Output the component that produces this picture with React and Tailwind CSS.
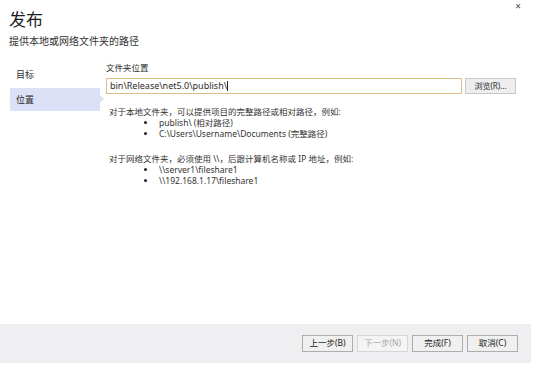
import React from 'react';

const FONT = { fontFamily: '"Noto Sans", "Noto Sans CJK SC", sans-serif' };

// ------- Footer button -------
const Btn = ({ children, disabled }) => (
  <button
    className={`w-[51px] h-[17px] flex items-center justify-center border text-[8.5px] leading-none ${
      disabled
        ? 'border-[#d6d6d6] bg-[#f4f4f4] text-[#a8a8a8]'
        : 'border-[#adadad] bg-[#f0f0f0] text-[#222]'
    }`}
  >
    {children}
  </button>
);

const Bullet = ({ children }) => (
  <li className="flex items-center h-[11px]">
    <span className="w-[3px] h-[3px] rounded-full bg-[#222] ml-[35px] mr-[12px]" />
    <span>{children}</span>
  </li>
);

export default function App() {
  return (
    <div className="relative w-[554px] h-[370px] bg-white flex flex-col text-[#2b2b2b]" style={FONT}>
      {/* close */}
      <span className="absolute top-[1px] right-[33px] text-[10px] leading-none text-[#444]">×</span>

      {/* Header */}
      <div className="pl-[9px] pt-[9px]">
        <h1 className="text-[17px] leading-[22px] text-[#1e1e1e]">发布</h1>
        <p className="text-[10px] leading-[14px] mt-[3px] text-[#333]">提供本地或网络文件夹的路径</p>
      </div>

      {/* Body */}
      <div className="flex mt-[12px]">
        <nav className="w-[90px] ml-[10px] pt-[4px] text-[9px]">
          <div className="h-[22px] flex items-center pl-[6px]">目标</div>
          <div className="relative h-[23px] mt-[2px] flex items-center pl-[6px] bg-[#dce1f8]">
            位置
            <span className="absolute right-[-4px] top-[7px] w-0 h-0 border-y-[4px] border-y-transparent border-l-[4px] border-l-[#dce1f8]" />
          </div>
        </nav>

        <div className="ml-[6px] flex-1 pt-[2px]">
          <div className="text-[8.5px] leading-[12px]">文件夹位置</div>
          <div className="flex items-center mt-[4px]">
            <div className="w-[356px] h-[16px] border border-[#dcbf82] flex items-center pl-[3px] text-[9px]">
              bin\Release\net5.0\publish\<span className="w-px h-[10px] bg-[#222]" />
            </div>
            <button className="ml-[3px] w-[51px] h-[16px] border border-[#c8c8c8] bg-[#eeeef0] text-[8px] flex items-center justify-center">
              浏览(R)...
            </button>
          </div>

          <div className="mt-[12px] pl-[3px] text-[8.5px] leading-[11px] text-[#333]">
            <p>对于本地文件夹，可以提供项目的完整路径或相对路径，例如:</p>
            <ul>
              <Bullet>publish\ (相对路径)</Bullet>
              <Bullet>C:\Users\Username\Documents (完整路径)</Bullet>
            </ul>
            <p className="mt-[14px]">对于网络文件夹，必须使用 \\，后跟计算机名称或 IP 地址，例如:</p>
            <ul>
              <Bullet>\\server1\fileshare1</Bullet>
              <Bullet>\\192.168.1.17\fileshare1</Bullet>
            </ul>
          </div>
        </div>
      </div>

      {/* Footer */}
      <div className="mt-auto mb-[7px] w-[531px] h-[39px] bg-[#efeff2] flex items-center justify-end gap-[4px] pr-[13px]">
        <Btn>上一步(B)</Btn>
        <Btn disabled>下一步(N)</Btn>
        <Btn>完成(F)</Btn>
        <Btn>取消(C)</Btn>
      </div>
    </div>
  );
}
